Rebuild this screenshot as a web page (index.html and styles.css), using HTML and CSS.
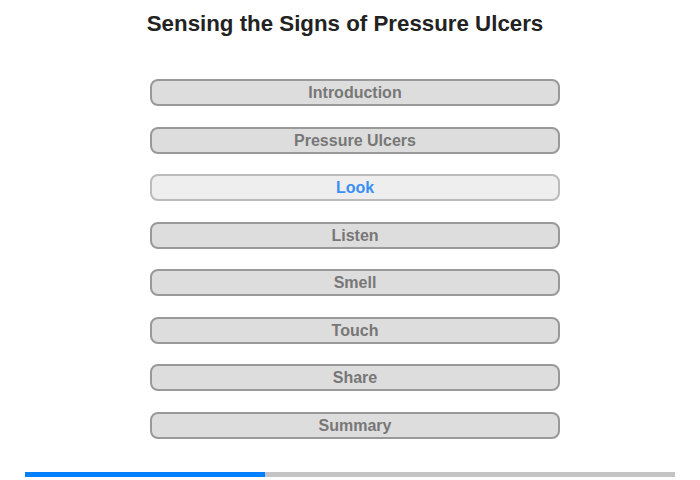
FILE: index.html
```html
<!DOCTYPE html>
<html>
<head>
<meta charset="utf-8">
<link rel="stylesheet" href="styles.css">
</head>
<body>
<div class="page">
  <h1 class="title">Sensing the Signs of Pressure Ulcers</h1>
  <nav class="menu">
    <div class="btn">Introduction</div>
    <div class="btn">Pressure Ulcers</div>
    <div class="btn active">Look</div>
    <div class="btn">Listen</div>
    <div class="btn">Smell</div>
    <div class="btn">Touch</div>
    <div class="btn">Share</div>
    <div class="btn">Summary</div>
  </nav>
  <div class="progress"><div class="fill" style="width:240px"></div></div>
</div>
</body>
</html>
```
FILE: styles.css
```css
html, body { margin: 0; padding: 0; background: #fff; }
body { font-family: "Liberation Sans", Arial, sans-serif; }
.page { width: 700px; height: 480px; display: flex; flex-direction: column; align-items: center; }
.title { margin: 11px 10px 0 0; font-size: 22.3px; line-height: 25px; font-weight: bold; color: #222; }
.menu { margin: 43px 0 0 10px; display: flex; flex-direction: column; gap: 20.5px; }
.btn { box-sizing: border-box; width: 410px; height: 27px; border: 2px solid #999; border-radius: 8px; background: #ddd; color: #777; font-weight: bold; font-size: 16px; line-height: 23px; text-align: center; }
.btn.active { background: #eee; border-color: #bbb; color: #3a8ff5; }
.progress { margin-top: 33px; width: 650px; height: 5px; background: #c4c4c4; }
.fill { height: 100%; background: #0080ff; }
```
